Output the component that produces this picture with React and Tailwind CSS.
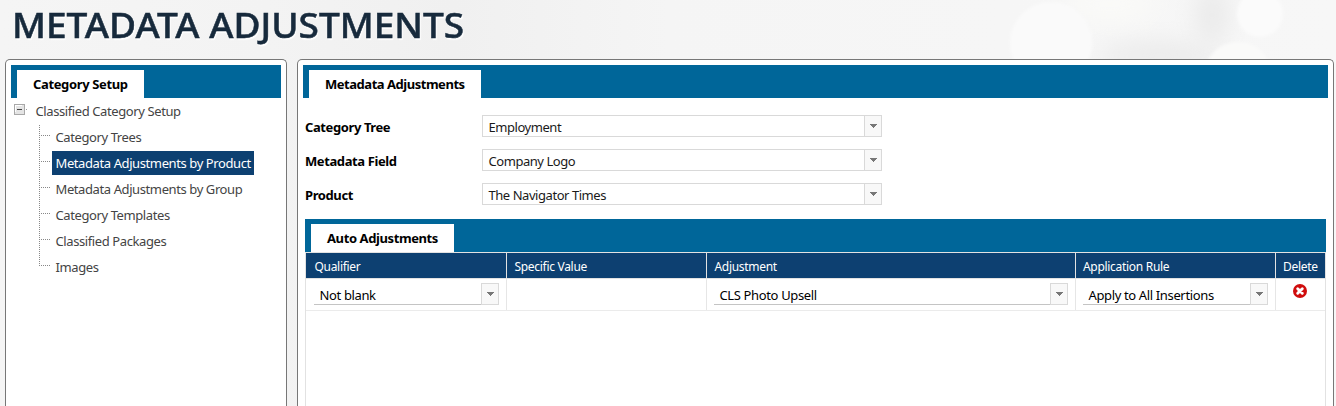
const TREE_ITEMS = [
  { label: "Category Trees" },
  { label: "Metadata Adjustments by Product", selected: true },
  { label: "Metadata Adjustments by Group" },
  { label: "Category Templates" },
  { label: "Classified Packages" },
  { label: "Images" },
];

const FIELDS = [
  { label: "Category Tree", value: "Employment" },
  { label: "Metadata Field", value: "Company Logo" },
  { label: "Product", value: "The Navigator Times" },
];

function Arrow() {
  return (
    <svg width="7" height="4" viewBox="0 0 7 4" shapeRendering="crispEdges" fill="#777">
      <path d="M0 0h7v1H0zM1 1h5v1H1zM2 2h3v1H2zM3 3h1v1H3z" />
    </svg>
  );
}

function TabBar({ title, tabClass }) {
  return (
    <div className="flex h-[33px] items-end bg-[#006699] pl-1.5">
      <div className={"h-7 bg-white pl-4 text-[13px] leading-[29px] font-bold whitespace-nowrap text-black " + tabClass}>
        {title}
      </div>
    </div>
  );
}

function Select({ value }) {
  return (
    <div className="flex h-[22px] w-[400px] border border-[#d9d9d9] bg-white">
      <div className="flex-1 pl-[5.5px] text-[13px] leading-[23px] tracking-[-0.45px] text-[#1a1a1a]">{value}</div>
      <div className="w-[17px] border-l border-[#d9d9d9] bg-[#f8f8f8] pt-2 pl-[5px]">
        <Arrow />
      </div>
    </div>
  );
}

function CellSelect({ value }) {
  return (
    <div className="flex h-[22px] w-full">
      <div className="flex-1 border-b border-[#c4c4c4] pl-[5.5px] text-[13px] leading-[25px] tracking-[-0.36px] whitespace-nowrap text-black">{value}</div>
      <div className="w-[18px] border border-[#d9d9d9] bg-[#f8f8f8] pt-2 pl-[5px]">
        <Arrow />
      </div>
    </div>
  );
}

function DeleteIcon() {
  return (
    <svg width="14" height="14" viewBox="0 0 14 14">
      <circle cx="7" cy="7" r="7" fill="#d00d0d" />
      <path d="M4.7 4.7l4.6 4.6M9.3 4.7l-4.6 4.6" stroke="#fff" strokeWidth="2.9" strokeLinecap="round" />
    </svg>
  );
}

function Backdrop() {
  return (
    <svg className="absolute inset-0" width="1336" height="406" viewBox="0 0 1336 406">
      <defs>
        <linearGradient id="base" x1="0" x2="1">
          <stop offset="0" stopColor="#f5f5f5" />
          <stop offset="0.2" stopColor="#f3f3f3" />
          <stop offset="0.34" stopColor="#f0f0f0" />
          <stop offset="0.5" stopColor="#f5f5f5" />
          <stop offset="1" stopColor="#f7f7f7" />
        </linearGradient>
        <filter id="soft" filterUnits="userSpaceOnUse" x="1000" y="-60" width="336" height="200">
          <feGaussianBlur stdDeviation="11" />
        </filter>
        <filter id="edge">
          <feGaussianBlur stdDeviation="1.5" />
        </filter>
      </defs>
      <rect width="1336" height="406" fill="url(#base)" />
      <ellipse cx="1160" cy="56" rx="62" ry="16" fill="#ececec" filter="url(#soft)" />
      <ellipse cx="1212" cy="15" rx="18" ry="30" fill="#ebebeb" filter="url(#soft)" />
      <ellipse cx="1110" cy="4" rx="45" ry="18" fill="#fafaf8" filter="url(#soft)" />
      <circle cx="1051" cy="43" r="41" fill="#fafafa" filter="url(#edge)" />
      <circle cx="1260" cy="14" r="23" fill="#fbfbfb" filter="url(#edge)" />
      <circle cx="1238" cy="76" r="34" fill="#fafaf9" filter="url(#edge)" />
    </svg>
  );
}

function CategoryTree() {
  return (
    <div className="pt-[1px] text-[13px] tracking-[-0.4px] text-[#444]">
      <div className="flex h-[26px] pl-[3px]">
        <svg className="mt-[5px]" width="14" height="12" viewBox="0 0 14 12" shapeRendering="crispEdges">
          <rect x="0.5" y="0.5" width="10" height="10" fill="#e4e4e4" stroke="#a8a8a8" />
          <path d="M1 1h7v1H2v6H1z" fill="#fff" />
          <path d="M3 5h5v1H3z" fill="#444" />
          <path d="M12 5h1v1h-1z" fill="#999" />
        </svg>
        <div className="ml-[7.5px] leading-[25px]">Classified Category Setup</div>
      </div>
      <div className="flex">
        <svg className="ml-7" width="13" height="156" viewBox="0 0 13 156" shapeRendering="crispEdges" stroke="#888" strokeDasharray="1 1">
          <path d="M0.5 0V142" />
          <path d="M0 10.5H11M0 36.5H11M0 62.5H11M0 88.5H11M0 114.5H11M0 140.5H11" />
        </svg>
        <div>
          {TREE_ITEMS.map((item) => (
            <div key={item.label} className="h-[26px]">
              <div
                className={
                  "h-6 pl-[3.5px] leading-[25px] whitespace-nowrap " +
                  (item.selected ? "w-[202px] bg-[#0d4071] text-white" : "")
                }
              >
                {item.label}
              </div>
            </div>
          ))}
        </div>
      </div>
    </div>
  );
}

function AdjustmentGrid() {
  return (
    <div className="flex flex-1 flex-col border-x border-t border-[#e2e2e2]">
      <div className="grid h-[26px] grid-cols-[201px_200px_369px_200px_49px] border-b border-[#e2e2e2] bg-[#0d4071] text-[12px] leading-[28px] tracking-[-0.3px] text-white">
        <div className="border-r border-[#e2e2e2] pl-[8.5px]">Qualifier</div>
        <div className="border-r border-[#e2e2e2] pl-[7.5px]">Specific Value</div>
        <div className="border-r border-[#e2e2e2] pl-[7.5px]">Adjustment</div>
        <div className="border-r border-[#e2e2e2] pl-[7px]">Application Rule</div>
        <div className="pl-[7px]">Delete</div>
      </div>
      <div className="grid h-8 grid-cols-[201px_200px_369px_200px_49px] border-b border-[#ebebeb]">
        <div className="border-r border-[#e6e6e6] pt-1 pr-[7px] pl-2"><CellSelect value="Not blank" /></div>
        <div className="border-r border-[#e6e6e6]" />
        <div className="border-r border-[#e6e6e6] pt-1 pr-[7px] pl-[7px]"><CellSelect value="CLS Photo Upsell" /></div>
        <div className="border-r border-[#e6e6e6] pt-1 pr-[7px] pl-[7px]"><CellSelect value="Apply to All Insertions" /></div>
        <div className="pt-[5px] pl-[17px]"><DeleteIcon /></div>
      </div>
    </div>
  );
}

export default function App() {
  return (
    <div className="relative h-[406px] w-[1336px] overflow-hidden bg-[#f5f5f5] font-['Noto_Sans','Open_Sans',sans-serif]">
      <Backdrop />
      <div className="relative flex h-full flex-col">
        <h1 className="h-[59px] shrink-0 origin-left scale-x-[1.089] pl-[11px] text-[34px] leading-[51px] font-medium whitespace-nowrap text-[#172a3c] [-webkit-text-stroke:0.5px_#172a3c] [text-shadow:1px_2px_1px_#fff]">
          METADATA ADJUSTMENTS
        </h1>
        <div className="flex flex-1 gap-2.5 pl-[5px]">
          <section className="w-[282px] rounded-t-[5px] border border-b-0 border-[#777] bg-white p-[5px] pb-0">
            <TabBar title="Category Setup" tabClass="w-[127px] tracking-[-0.36px]" />
            <CategoryTree />
          </section>
          <section className="flex w-[1037px] flex-col rounded-t-[5px] border border-b-0 border-[#777] bg-white p-[5px] pb-0">
            <TabBar title="Metadata Adjustments" tabClass="w-[172px] tracking-[-0.47px]" />
            <div className="flex flex-col gap-3 pt-[17px] pl-[2px]">
              {FIELDS.map((f) => (
                <div key={f.label} className="flex h-[22px]">
                  <div className="w-[177px] text-[13px] leading-[25px] font-bold tracking-[-0.4px] text-black">{f.label}</div>
                  <Select value={f.value} />
                </div>
              ))}
            </div>
            <div className="mt-3.5 mr-[2px] ml-[2px] flex flex-1 flex-col">
              <TabBar title="Auto Adjustments" tabClass="w-[143px] tracking-[-0.4px]" />
              <AdjustmentGrid />
            </div>
          </section>
        </div>
      </div>
    </div>
  );
}
